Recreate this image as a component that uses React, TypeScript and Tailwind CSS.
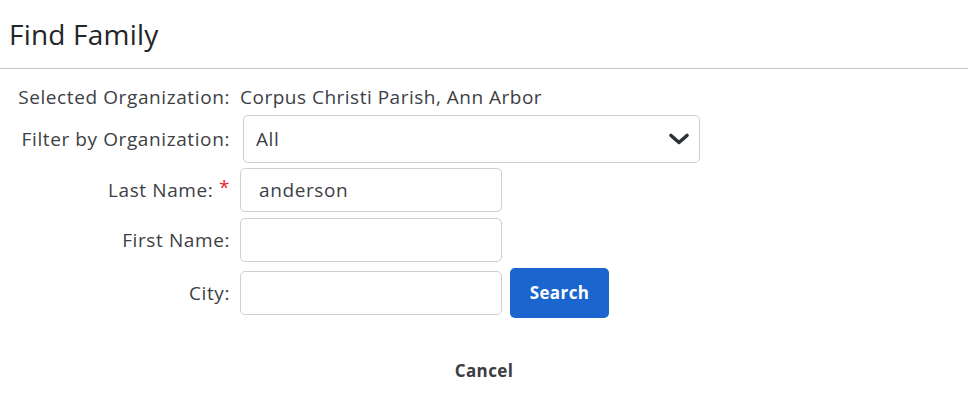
export default function App() {
  return (
    <div className="h-[407px] w-[968px] bg-white font-['Open_Sans',sans-serif] text-[#3d4045]">
      <div className="flex h-[69px] items-center border-b border-[#c6c6c6] pl-[9px]">
        <h1 className="text-[28px] font-normal tracking-[0.2px] text-[#232629]">Find Family</h1>
      </div>

      <div className="mt-[16px] flex h-6 items-center text-[19px] tracking-[0.6px]">
        <div className="w-[230px] text-right">Selected Organization:</div>
        <div className="ml-[10px] tracking-[0.5px]">Corpus Christi Parish, Ann Arbor</div>
      </div>

      <div className="mt-[6px] flex items-center text-[19px] tracking-[0.6px]">
        <div className="w-[230px] text-right">Filter by Organization:</div>
        <div className="ml-[13px] flex h-[48px] w-[457px] items-center justify-between rounded-[5px] border border-[#cfcfcf] pl-[12px] pr-[9px]">
          <span>All</span>
          <svg width="22" height="14" viewBox="0 0 22 14" fill="none">
            <path d="M3 3.5 L11 10.5 L19 3.5" stroke="#2e3136" strokeWidth="3.6" strokeLinecap="round" strokeLinejoin="round" />
          </svg>
        </div>
      </div>

      <div className="mt-[5px] flex items-center text-[19px] tracking-[0.6px]">
        <div className="w-[230px] text-right">
          Last Name: <span className="relative -top-[3px] text-[#e8262c]">*</span>
        </div>
        <div className="ml-[10px] flex h-[44px] w-[262px] items-center rounded-[5px] border border-[#cfcfcf] pl-[18px]">
          anderson
        </div>
      </div>

      <div className="mt-[6px] flex items-center text-[19px] tracking-[0.6px]">
        <div className="w-[230px] text-right">First Name:</div>
        <div className="ml-[10px] h-[44px] w-[262px] rounded-[5px] border border-[#cfcfcf]" />
      </div>

      <div className="mt-[6px] flex h-[50px] items-center text-[19px] tracking-[0.6px]">
        <div className="w-[230px] text-right">City:</div>
        <div className="ml-[10px] h-[44px] w-[262px] rounded-[5px] border border-[#cfcfcf]" />
        <button className="ml-[8px] h-[50px] w-[99px] rounded-[5px] bg-[#1b65cf] text-[17px] font-bold tracking-[0.4px] text-white">
          Search
        </button>
      </div>

      <div className="mt-[40px] flex justify-center">
        <button className="text-[17px] font-bold tracking-[0.4px] text-[#3a3d42]">Cancel</button>
      </div>
    </div>
  )
}
